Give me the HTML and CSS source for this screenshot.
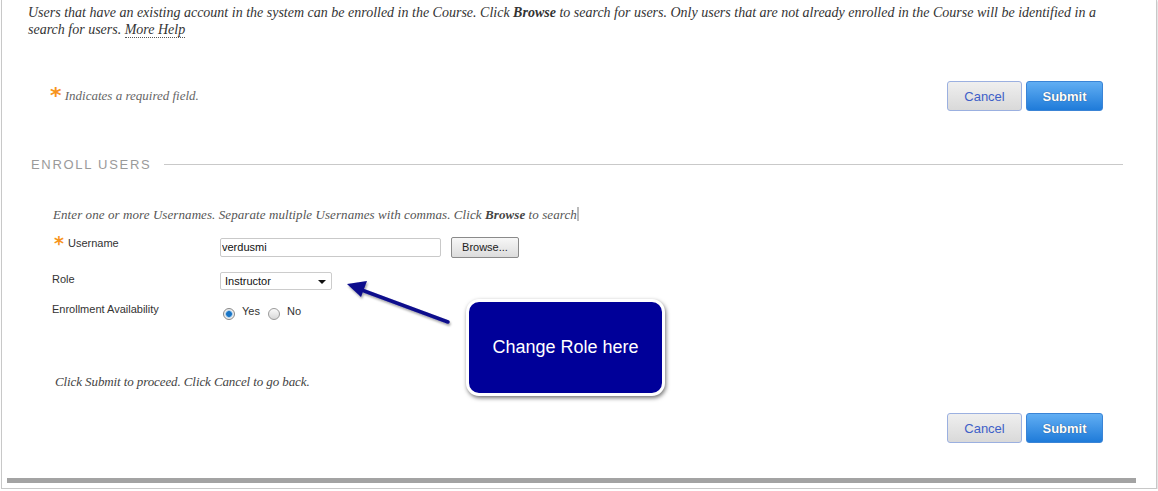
FILE: index.html
```html
<!DOCTYPE html>
<html lang="en">

<head>
    <meta charset="UTF-8">
    <meta name="viewport" content="width=device-width, initial-scale=1.0">
    <title>Enroll Users</title>
    <link rel="stylesheet" href="styles.css">
</head>

<body>
    <div class="frame">
        <p class="intro">Users that have an existing account in the system can be enrolled in the Course. Click <b>Browse</b> to search for users. Only users that are not already enrolled in the Course will be identified in a search for users. <a href="#" class="help">More Help</a></p>

        <div class="submit-row top-row">
            <p class="req"><span class="star">*</span> Indicates a required field.</p>
            <div class="btns">
                <button class="btn cancel">Cancel</button>
                <button class="btn submit">Submit</button>
            </div>
        </div>

        <div class="step">
            <h2 class="step-title"><span>Enroll Users</span></h2>
            <div class="step-content">
                <p class="instr">Enter one or more Usernames. Separate multiple Usernames with commas. Click <b>Browse</b> to search<span class="caret"></span></p>
                <ul class="fields">
                    <li>
                        <div class="label"><span class="star">*</span> Username</div>
                        <div class="field">
                            <input type="text" class="txt" value="verdusmi">
                            <button class="browse">Browse...</button>
                        </div>
                    </li>
                    <li>
                        <div class="label">Role</div>
                        <div class="field">
                            <div class="select">Instructor <span class="tri"></span></div>
                        </div>
                    </li>
                    <li>
                        <div class="label">Enrollment Availability</div>
                        <div class="field radios">
                            <span class="radio on"></span><span class="opt">Yes</span>
                            <span class="radio"></span><span class="opt">No</span>
                        </div>
                    </li>
                </ul>
            </div>
        </div>

        <p class="proceed">Click Submit to proceed. Click Cancel to go back.</p>

        <div class="submit-row bottom-row">
            <div class="btns">
                <button class="btn cancel">Cancel</button>
                <button class="btn submit">Submit</button>
            </div>
        </div>

        <div class="bar"></div>

        <!-- annotation -->
        <svg class="arrow" width="120" height="60" viewBox="0 0 120 60">
            <defs>
                <filter id="sh" x="-20%" y="-40%" width="140%" height="180%">
                    <feDropShadow dx="1" dy="2" stdDeviation="1.2" flood-color="#000" flood-opacity="0.35"/>
                </filter>
            </defs>
            <g filter="url(#sh)">
                <line x1="103" y1="41" x2="14" y2="8" stroke="#0b0b8c" stroke-width="3.5" stroke-linecap="round"/>
                <polygon points="2,3 22,0 16,16" fill="#0b0b8c"/>
            </g>
        </svg>
        <div class="callout">Change Role here</div>
    </div>
</body>

</html>
```

FILE: styles.css
```css
body {
    margin: 0;
    background: #fff;
    font-family: "Liberation Sans", Arial, sans-serif;
}

.frame {
    position: relative;
    width: 1154px;
    height: 488px;
    margin-left: 1px;
    border: 1px solid #c8c8c8;
    border-top: none;
    box-shadow: 1px 1px 2px rgba(0, 0, 0, 0.15);
    overflow: hidden;
}

.intro {
    margin: 4px 0 0 26px;
    width: 1100px;
    font-family: "Liberation Serif", Georgia, serif;
    font-style: italic;
    font-size: 14px;
    line-height: 17px;
    color: #333;
}

.help {
    color: #333;
    text-decoration: none;
    border-bottom: 1px dotted #555;
}

.submit-row {
    display: flex;
    align-items: center;
    justify-content: space-between;
    padding-right: 53px;
}

.top-row {
    margin-top: 43px;
    padding-left: 48px;
}

.bottom-row {
    justify-content: flex-end;
    margin-top: 23px;
}

.req {
    margin: 0;
    font-family: "Liberation Serif", Georgia, serif;
    font-style: italic;
    font-size: 13px;
    color: #666;
}

.star {
    display: inline-block;
    font-family: "DejaVu Sans", sans-serif;
    font-style: normal;
    font-weight: bold;
    font-size: 19px;
    line-height: 0;
    color: #f7941d;
}

.req .star {
    font-size: 22px;
    vertical-align: -3px;
}

.btns {
    display: flex;
    gap: 4px;
}

.btn {
    height: 30px;
    border-radius: 3px;
    font-family: "Liberation Sans", Arial, sans-serif;
    font-size: 13px;
    padding: 0;
    cursor: pointer;
}

.cancel {
    width: 75px;
    border: 1px solid #9bb0e0;
    background: linear-gradient(#efefef, #d9d9d9);
    color: #3e5fc8;
}

.submit {
    width: 77px;
    border: 1px solid #3a84d6;
    background: linear-gradient(#61aef3, #1f7bd9);
    color: #fff;
    font-weight: bold;
    text-shadow: 0 0 1px #1d3b66;
}

.step {
    margin-top: 46px;
}

.step-title {
    display: flex;
    align-items: center;
    gap: 13px;
    margin: 0 33px 0 29px;
    font-family: "Liberation Sans", Arial, sans-serif;
    font-weight: normal;
    font-size: 13px;
    letter-spacing: 1.7px;
    text-transform: uppercase;
    color: #9a9a9a;
}

.step-title::after {
    content: "";
    flex: 1;
    border-top: 1px solid #c9c9c9;
}

.step-content {
    padding-left: 50px;
}

.instr {
    margin: 35px 0 14px 1px;
    font-family: "Liberation Serif", Georgia, serif;
    font-style: italic;
    font-size: 13px;
    letter-spacing: 0.08px;
    color: #555;
}

.instr b {
    color: #444;
}

.caret {
    display: inline-block;
    width: 2px;
    height: 14px;
    background: #bbb;
    vertical-align: -2px;
}

.fields {
    list-style: none;
    margin: 0;
    padding: 0;
}

.fields li {
    display: flex;
    align-items: center;
    height: 20px;
    margin-bottom: 14px;
}

.fields li:nth-child(2) {
    margin-bottom: 10px;
}

.label {
    align-self: flex-start;
    padding-top: 2px;
    width: 168px;
    font-size: 11px;
    color: #333;
}

.fields li:first-child .label {
    padding-top: 0;
}

.label .star {
    margin-left: 2px;
    margin-right: 1px;
    vertical-align: -3px;
}

.field {
    display: flex;
    align-items: center;
    font-size: 11px;
}

.txt {
    width: 217px;
    height: 17px;
    padding: 0 1px;
    border: 1px solid #c9c9c9;
    border-radius: 2px;
    font-family: "Liberation Sans", Arial, sans-serif;
    font-size: 11px;
    color: #111;
}

.browse {
    margin-left: 10px;
    width: 68px;
    height: 21px;
    padding: 0;
    border: 1px solid #8a8a8a;
    border-radius: 2px;
    background: linear-gradient(#f7f7f7, #dcdcdc);
    font-family: "Liberation Sans", Arial, sans-serif;
    font-size: 11px;
    color: #222;
}

.select {
    position: relative;
    width: 106px;
    height: 16px;
    line-height: 16px;
    padding-left: 4px;
    border: 1px solid #ccc;
    border-radius: 2px;
    color: #111;
}

.tri {
    position: absolute;
    right: 5px;
    top: 7px;
    border-left: 4px solid transparent;
    border-right: 4px solid transparent;
    border-top: 4px solid #111;
}

.radios {
    padding-left: 3px;
}

.radio {
    display: inline-block;
    width: 10px;
    height: 10px;
    border: 1px solid #9a9a9a;
    border-radius: 50%;
    background: linear-gradient(#fafafa, #d8d8d8);
    margin-top: 5px;
}

.radio.on {
    background: radial-gradient(circle, #1a74c4 0 2.5px, #6fb0e6 3px, #eee 4px);
    border-color: #888;
}

.opt {
    margin: 0 8px 0 7px;
    color: #333;
}

.proceed {
    margin: 53px 0 0 53px;
    font-family: "Liberation Serif", Georgia, serif;
    font-style: italic;
    font-size: 13px;
    letter-spacing: -0.1px;
    color: #444;
}

.bar {
    margin: 35px 20px 0 5px;
    height: 5px;
    background: #a3a3a3;
}

.arrow {
    position: absolute;
    left: 343px;
    top: 281px;
}

.callout {
    position: absolute;
    left: 464px;
    top: 299px;
    width: 193px;
    height: 91px;
    display: flex;
    align-items: center;
    justify-content: center;
    border: 3px solid #fff;
    border-radius: 13px;
    background: #000099;
    box-shadow: 1px 2px 4px rgba(0, 0, 0, 0.55);
    font-family: "Liberation Sans", Arial, sans-serif;
    font-size: 18px;
    color: #fff;
}
```
